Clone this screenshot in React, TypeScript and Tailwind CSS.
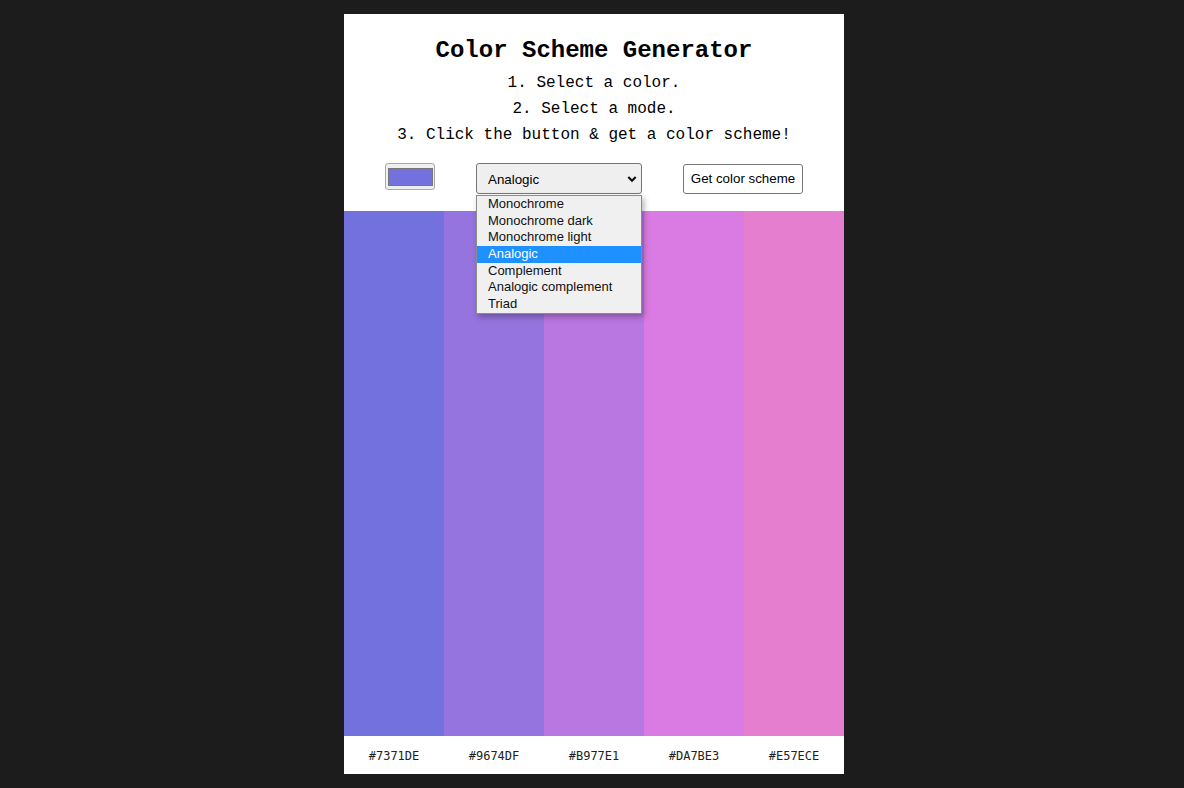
import React from "react";

const colors = ["#7371DE", "#9674DF", "#B977E1", "#DA7BE3", "#E57ECE"];
const modes = [
  "Monochrome",
  "Monochrome dark",
  "Monochrome light",
  "Analogic",
  "Complement",
  "Analogic complement",
  "Triad",
];

export default function App() {
  return (
    <div className="min-h-[788px] w-full bg-[#1c1c1c] pt-[14px] pb-[14px] pl-[4px]">
      <div className="mx-auto flex h-[760px] w-[500px] flex-col bg-white">
        <header className="relative flex h-[197px] flex-col items-center pt-[21px] font-['Liberation_Mono',monospace] text-black">
          <h1 className="text-[24px] font-bold leading-[32px]">Color Scheme Generator</h1>
          <div className="mt-[3px] flex flex-col items-center text-[16px] leading-[26px]">
            <p>1. Select a color.</p>
            <p>2. Select a mode.</p>
            <p>3. Click the button &amp; get a color scheme!</p>
          </div>
          <div className="mt-[15px] flex w-full items-start justify-evenly font-['Liberation_Sans',Arial,sans-serif] text-[13.33px]">
            <div className="flex h-[27px] w-[50px] items-center justify-center rounded-[3px] border border-[#a9a9a9] bg-[#efefef]">
              <div className="h-[18px] w-[45px] border border-[#777] bg-[#7371DE]" />
            </div>
            <div className="relative">
              <div className="flex h-[31px] w-[166px] items-center justify-between rounded-[3px] border border-[#767676] bg-[#efefef] pt-[2px] pl-[11px] pr-[3px] text-black">
                <span>Analogic</span>
                <svg width="12" height="12" viewBox="0 0 12 12" className="-mt-[2px]">
                  <path d="M2.3 4 L6 7.7 L9.7 4" fill="none" stroke="#111" strokeWidth="2.2" />
                </svg>
              </div>
              <ul className="absolute left-0 top-[32px] z-10 w-[166px] border border-[#8c8c8c] bg-[#f0f0f0] py-0 text-[13px] shadow-[2px_3px_6px_rgba(0,0,0,0.3)]">
                {modes.map((m) => (
                  <li
                    key={m}
                    className={
                      m === "Analogic"
                        ? "h-[16.7px] bg-[#1e90ff] pl-[11px] leading-[16.7px] text-white"
                        : "h-[16.7px] pl-[11px] leading-[16.7px] text-[#111]"
                    }
                  >
                    {m}
                  </li>
                ))}
              </ul>
            </div>
            <button className="mt-[1px] h-[30px] w-[120px] rounded-[3px] border border-[#767676] bg-white text-[13.33px] text-black">
              Get color scheme
            </button>
          </div>
        </header>
        <div className="flex h-[525px]">
          {colors.map((c) => (
            <div key={c} className="h-full flex-1" style={{ backgroundColor: c }} />
          ))}
        </div>
        <div className="flex h-[38px] items-center pt-[1px]">
          {colors.map((c) => (
            <div key={c} className="flex-1 text-center font-['DejaVu_Sans_Mono',monospace] text-[12px] text-[#222]">
              {c}
            </div>
          ))}
        </div>
      </div>
    </div>
  );
}
